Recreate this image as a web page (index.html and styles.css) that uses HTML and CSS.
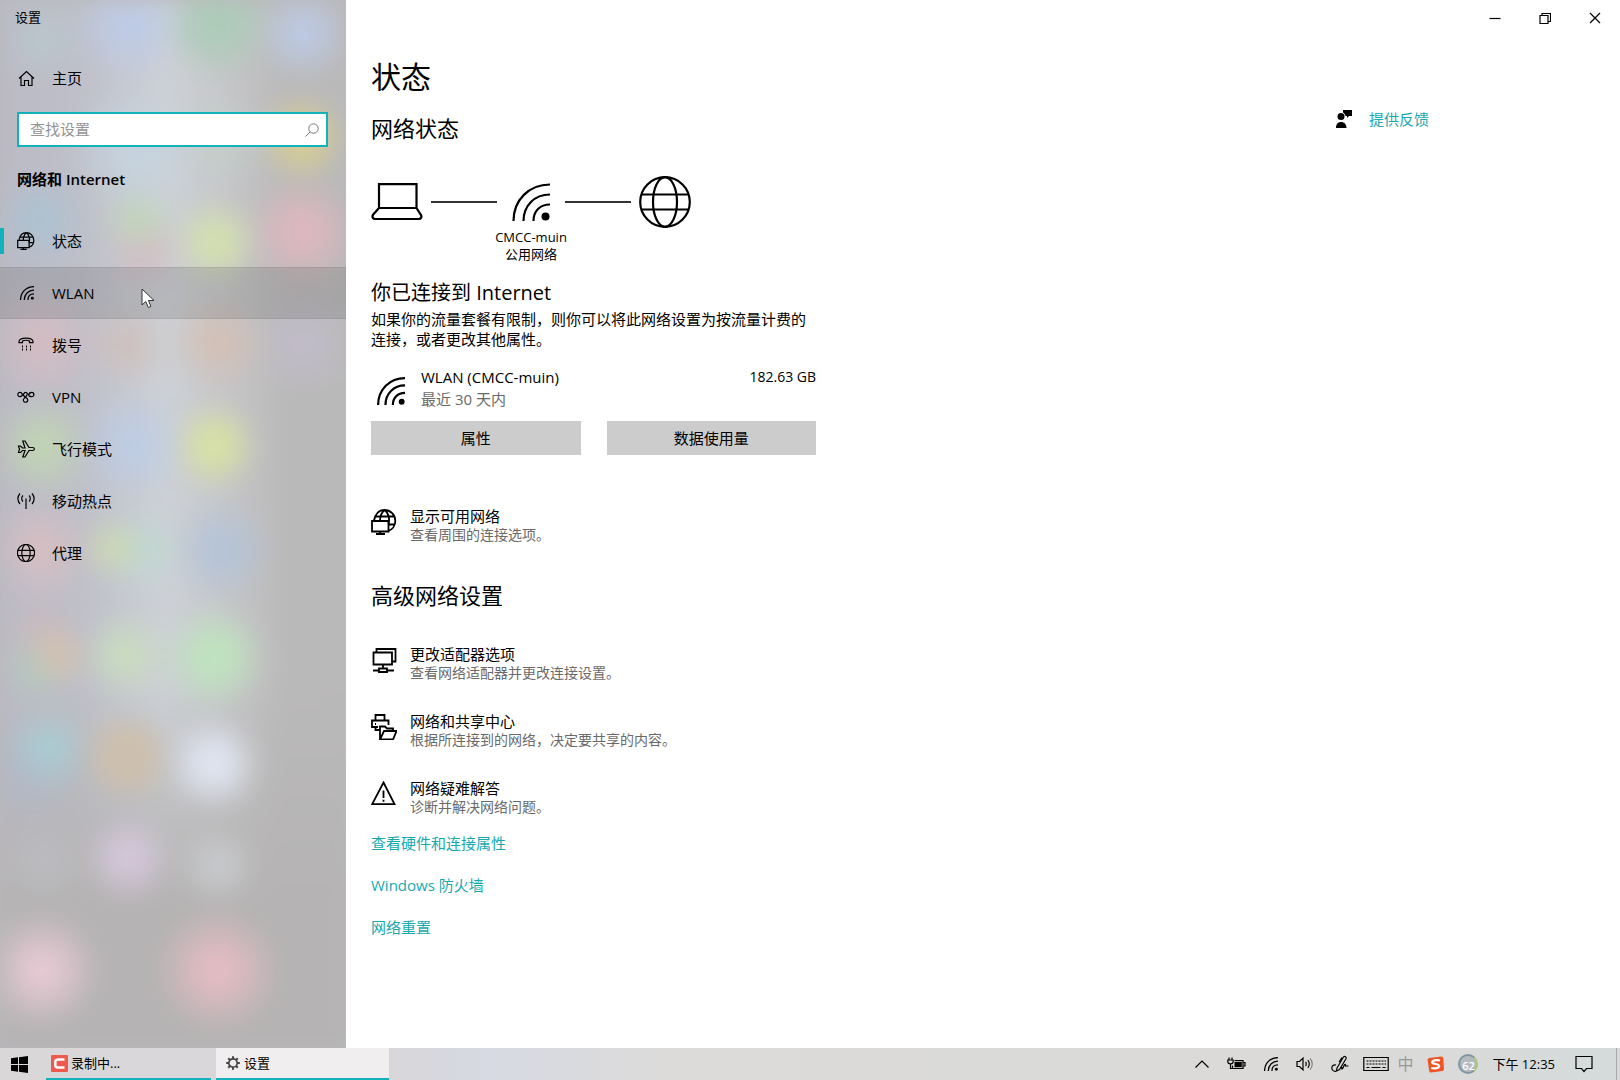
FILE: index.html
```html
<!DOCTYPE html>
<html lang="zh-CN">
<head>
<meta charset="utf-8">
<meta name="viewport" content="width=device-width, initial-scale=1">
<title>设置</title>
<link rel="stylesheet" href="styles.css">
</head>
<body>
<svg class="defs" aria-hidden="true">
  <symbol id="i-wifi" viewBox="0 0 38 38">
    <path d="M1.500 38C1.500 17 17 1.500 38 1.500M11.500 38C11.500 22.500 22.500 11.500 38 11.500M21.500 38C21.500 28 28 21.500 38 21.500"/>
    <circle class="solid" cx="33.500" cy="33.500" r="4"/>
  </symbol>
  <symbol id="i-globe" viewBox="0 0 52 52">
    <circle cx="26" cy="26" r="24.800"/><ellipse cx="26" cy="26" rx="12" ry="24.800"/><path d="M3 18.500h46M3 33.500h46"/>
  </symbol>
  <symbol id="i-netpc" viewBox="0 0 26 26">
    <path d="M3 11.500C4 5 8 1 13.500 1c6 0 10.800 4.800 10.800 10.800 0 5-3 9-7 10.200M13.500 1C10.500 3.500 9 7 9 12M13.500 1c4 3 5.500 8 4 14.500M4.500 7.500h18.500M17.500 15.500h6"/>
    <path d="M1 12h16.500v10.500H1zM9.300 22.500v2.500M5 25h9"/>
  </symbol>
</svg>

<div class="window">
  <aside class="sidebar">
    <div class="app-title">设置</div>
    <a class="home" href="#home">
      <svg class="icon" width="17" height="17" viewBox="0 0 17 17"><path d="M1 8.500 8.500 1.500 16 8.500M3 7v8.500h3.500v-5h4v5H14V7"/></svg>
      主页
    </a>
    <form class="search">
      <input type="text" placeholder="查找设置" aria-label="查找设置">
      <svg class="icon" width="14" height="14" viewBox="0 0 14 14"><circle cx="8.500" cy="5.500" r="4.700"/><path d="M5 9 .5 13.500"/></svg>
    </form>
    <h2 class="group">网络和 Internet</h2>
    <nav class="nav">
      <a class="active" href="#status"><svg class="icon netpc-s" width="18" height="18"><use href="#i-netpc"/></svg>状态</a>
      <a class="hover" href="#wlan"><svg class="icon wifi-s" width="18" height="14" viewBox="-3 0 18 14"><use href="#i-wifi" width="14" height="14"/></svg>WLAN</a>
      <a href="#dial"><svg class="icon" width="18" height="18" viewBox="0 0 18 18"><path d="M2 5.500C2.500 1 15.500 1 16 5.500v1.200h-3.500V5C11 4 7 4 5.500 5v1.700H2z"/><path class="keys" d="M5 10.500h9M5 13.500h9"/></svg>拨号</a>
      <a href="#vpn"><svg class="icon" width="18" height="14" viewBox="0 0 18 14"><path d="M5.200 4.500a2.200 2.200 0 1 0-2.200 2.200C6 6.700 6.500 2 9 2.500s1 3-.5 4.500-3 2-2 4 4.500 1.500 4.300-1S6 7 6.500 4.500"/><path d="M12.500 4.500a2.200 2.200 0 1 1 2.200 2.200C11.500 6.700 10.500 5 13 2.500"/></svg>VPN</a>
      <a href="#airplane"><svg class="icon" width="18" height="18" viewBox="0 0 18 18"><path d="M1.500 6 3.500 6 5.500 8H8L5.800 1H8l4 6.500h3.500c2.500 0 2.500 3 0 3H12L8 17H5.800L8 10.500H5.500l-2 2h-2L2.500 9.200z"/></svg>飞行模式</a>
      <a href="#hotspot"><svg class="icon" width="18" height="18" viewBox="0 0 18 18"><path d="M9 6.500V17M6 3.500C4.300 5 4.300 8 6 9.500M12 3.500c1.700 1.500 1.700 4.500 0 6M3 1.500c-2.800 3-2.800 7.500 0 10.500M15 1.500c2.800 3 2.800 7.500 0 10.500"/></svg>移动热点</a>
      <a href="#proxy"><svg class="icon globe-s" width="18" height="18"><use href="#i-globe"/></svg>代理</a>
    </nav>
    <svg class="cursor" width="14" height="21" viewBox="0 0 14 21" aria-hidden="true"><path d="M1 1v16l3.800-3.500 2.500 6 2.600-1.100-2.500-5.900H13z"/></svg>
  </aside>

  <main class="main">
    <div class="controls">
      <button aria-label="最小化"><svg class="icon" width="12" height="12" viewBox="0 0 12 12"><path d="M.5 6.500h11"/></svg></button>
      <button aria-label="还原"><svg class="icon" width="12" height="12" viewBox="0 0 12 12"><path d="M1 3.500h8v8H1zM3 3.500v-2h8.500v8H9"/></svg></button>
      <button aria-label="关闭"><svg class="icon" width="12" height="12" viewBox="0 0 12 12"><path d="m1 1 10 10M11 1 1 11"/></svg></button>
    </div>
    <h1>状态</h1>
    <div class="columns">
      <div class="content">
        <h2>网络状态</h2>
        <div class="diagram">
          <svg class="icon big" width="52" height="52" viewBox="0 0 52 52"><path d="M8 8.200h37.500V32H8zM8 32l-5.800 6.500c-1.500 2-.5 4.500 2 4.500h43.500c2.500 0 3.500-2.500 2-4.500L45.500 32"/></svg>
          <span class="link-line"></span>
          <svg class="icon big mid" width="38" height="38"><use href="#i-wifi"/></svg>
          <span class="link-line"></span>
          <svg class="icon big end" width="52" height="52"><use href="#i-globe"/></svg>
          <div class="net-name">CMCC-muin<br>公用网络</div>
        </div>
        <h3>你已连接到 Internet</h3>
        <p class="note">如果你的流量套餐有限制，则你可以将此网络设置为按流量计费的连接，或者更改其他属性。</p>
        <div class="usage">
          <svg class="icon wifi-m" width="28" height="28"><use href="#i-wifi"/></svg>
          <div class="usage-name">WLAN (CMCC-muin)<small>最近 30 天内</small></div>
          <span class="amount">182.63 GB</span>
        </div>
        <div class="buttons">
          <button>属性</button>
          <button>数据使用量</button>
        </div>
        <a class="item first" href="#available">
          <svg class="icon med" width="26" height="26"><use href="#i-netpc"/></svg>
          <span>显示可用网络<small>查看周围的连接选项。</small></span>
        </a>
        <h2 class="advanced">高级网络设置</h2>
        <div class="items">
          <a class="item" href="#adapter">
            <svg class="icon med" width="26" height="26" viewBox="0 0 26 26"><path d="M2.500 5.500h18.500v12H2.500zM5.500 5.500V2H24.500v12.500H21M12 17.500v4M8 21.500h8v3.500H8zM2 23.500h6M16 23.500h7"/></svg>
            <span>更改适配器选项<small>查看网络适配器并更改连接设置。</small></span>
          </a>
          <a class="item" href="#sharing">
            <svg class="icon med" width="26" height="26" viewBox="0 0 26 26"><path d="M4.500 6.500V1h9v5.500M7 13H1V6.500h16.500V11M4 10h1M4.500 13v3h4M9 25.500V12.500h5l2 2h6V17M9 25.500 13 17h12.500L22 25.500z"/></svg>
            <span>网络和共享中心<small>根据所连接到的网络，决定要共享的内容。</small></span>
          </a>
          <a class="item" href="#troubleshoot">
            <svg class="icon med" width="26" height="26" viewBox="0 0 26 26"><path d="M12.500 1.500 23.500 23.200H1.200zM12.500 9.500v7.500M12.500 18.800v2"/></svg>
            <span>网络疑难解答<small>诊断并解决网络问题。</small></span>
          </a>
        </div>
        <div class="links">
          <a href="#hardware">查看硬件和连接属性</a>
          <a href="#firewall">Windows 防火墙</a>
          <a href="#reset">网络重置</a>
        </div>
      </div>
      <a class="feedback" href="#feedback">
        <svg width="16" height="18" viewBox="0 0 16 18" aria-hidden="true"><path d="M7 0h9v6h-3l-2 2V6H9.500C9 4 8 3 7 2.500z"/><circle cx="5" cy="6.500" r="3.500"/><path d="M0 18c0-4 2-6 5-6s5.500 2 5.500 6z"/></svg>
        提供反馈
      </a>
    </div>
  </main>
</div>

<footer class="taskbar">
  <button class="start" aria-label="开始"><svg width="17" height="17" viewBox="0 0 17 17"><path d="M0 2.300 7 1.300V8H0zM8 1.200 17 0v8H8zM0 9h7v6.800l-7-1zM8 9h9v8l-9-1.200z"/></svg></button>
  <button class="task"><svg width="17" height="17" viewBox="0 0 17 17"><rect width="17" height="17" rx="1" fill="#ee5a4d"/><path d="M13.500 4.500H7Q4.300 4.500 4.300 7v3q0 2.500 2.700 2.500h6.500" fill="none" stroke="#fff" stroke-width="2.500"/></svg>录制中...</button>
  <button class="task current"><svg width="14" height="14" viewBox="0 0 14 14"><circle cx="7" cy="7" r="4.200" fill="none" stroke="#444" stroke-width="1.700"/><path d="M7 .2v2.400M7 11.400v2.400M.2 7h2.400M11.400 7h2.400M2.200 2.200l1.700 1.700M10.100 10.100l1.700 1.700M11.800 2.200l-1.700 1.700M3.900 10.100l-1.700 1.700" stroke="#444" stroke-width="2"/></svg>设置</button>
  <div class="tray">
    <div class="tray-icons">
      <svg class="icon" width="14" height="18" viewBox="0 0 14 18"><path d="M.5 12.500 7 6l6.500 6.500"/></svg>
      <svg class="icon" width="19" height="18" viewBox="0 0 19 18"><path d="M7.500 5.500H16v8H5.500v-3M16.200 7.500h1.800v3.500h-1.800M2 2.500v2.500M5 2.500v2.500M.8 5h5.400v1.500c0 3.200-5.400 3.200-5.400 0zM3.500 9v4.500h2"/><path class="solid" d="M7.500 6.800H14.800v5.400H7.500z"/></svg>
      <svg class="icon wifi-s" width="14" height="14"><use href="#i-wifi"/></svg>
      <svg class="icon" width="17" height="18" viewBox="0 0 17 18"><path d="M1 6.500h2.500L7 3.200v11.600L3.500 11.500H1zM9.500 7c1 1 1 3 0 4M11.800 5.200c2 2 2 5.600 0 7.600"/><path opacity=".4" d="M14 3.500c3 3 3 8 0 11"/></svg>
      <svg class="icon" width="18" height="18" viewBox="0 0 18 18"><path d="M6 13 12.500 2c1-1.500 3.500 0 2.500 1.800L8.500 14.500 5.500 16zM5 10C2.500 9.500.8 11 .8 13s2 4 4.700 3M11 12c-1 4 1 1.500 2-1.500 1-2 2-1 1.500.5h3M11 2.500 8 7"/></svg>
    </div>
    <svg class="icon" width="26" height="18" viewBox="0 0 26 18"><path d="M.8 2.500h24.400v13H.8z"/><path class="dots" d="M3.500 6h19.500M3.500 9h19.500"/><path d="M3.500 12.500h3M8.500 12.500h9M19.500 12.500h3"/></svg>
    <span class="ime">中</span>
    <svg width="17" height="17" viewBox="0 0 17 17"><path fill="#ee5424" d="M2 2 14.500.5q1.500 0 1.800 1.500l.7 11q0 1.500-1.500 2L4 16.500q-1.500.2-1.800-1.500L.6 4Q.5 2.500 2 2z"/><path fill="none" stroke="#fff" stroke-width="2.200" d="M13 4.500C9 3.500 5 4.500 5.200 6.500c.3 2 7 1 7 3.500 0 2-4 3-8 2"/></svg>
    <span class="score">62</span>
    <time>下午 12:35</time>
    <svg class="icon action" width="18" height="18" viewBox="0 0 18 18"><path d="M1 1.500h16v12h-5.500L9 16.500l-2.500-3H1z"/></svg>
    <button class="desktop" aria-label="显示桌面"></button>
  </div>
</footer>
</body>
</html>
```

FILE: styles.css
```css
* { box-sizing: border-box; }

:root {
  --accent: #12b2bd;
  --link: #17a9b0;
}

body {
  margin: 0;
  min-height: 100vh;
  display: flex;
  flex-direction: column;
  font: 15px/20px "Open Sans", "Noto Sans CJK SC", sans-serif;
  color: #000;
  background: #fff;
}

h1, h2, h3, p { margin: 0; font-weight: 400; }
a { color: inherit; text-decoration: none; }
button { font: inherit; color: inherit; border: 0; padding: 0; background: none; }
small { display: block; color: #6a6a6a; }

.defs { display: none; }
.icon { fill: none; stroke: currentColor; stroke-width: 1.2; flex: none; }
.solid { fill: currentColor; stroke: none; }
.dots { stroke-dasharray: 2 1; }
.keys { stroke-width: 2; stroke-dasharray: 1 3; }
.big { stroke-width: 2.2; }
.med { stroke-width: 1.8; }
.netpc-s { stroke-width: 1.8; }
.wifi-s { stroke-width: 3.4; }
.wifi-m { stroke-width: 3; }
.globe-s { stroke-width: 3.4; }

.window { flex: 1; display: flex; }

/* Sidebar: translucent panel over a blurred desktop */
.sidebar {
  position: relative;
  isolation: isolate;
  overflow: hidden;
  flex: none;
  width: 346px;
}

.sidebar::before {
  content: "";
  position: absolute;
  z-index: -1;
  inset: -24px;
  padding: 24px;
  filter: blur(10px);
  background-color: #b9b8bb;
  background-origin: content-box;
  background-repeat: no-repeat;
  background-image:
    radial-gradient(circle at 43px 40px, #b9c7cc, #b9c7cc00 46px),
    radial-gradient(circle at 130px 25px, #bccbea, #bccbea00 60px),
    radial-gradient(circle at 217px 22px, #aecbb9 20px, #aecbb900 58px),
    radial-gradient(circle at 303px 33px, #bdcdec, #bdcdec00 50px),
    radial-gradient(circle at 135px 150px, #c5d4e0, #c5d4e000 70px),
    radial-gradient(circle at 302px 138px, #d9cf90 8px, #d9cf9000 46px),
    radial-gradient(circle at 220px 140px, #c3cfca, #c3cfca00 50px),
    radial-gradient(circle at 40px 220px, #abc3d2, #abc3d200 50px),
    radial-gradient(circle at 138px 218px, #c1d6b5, #c1d6b500 38px),
    radial-gradient(circle at 145px 252px, #d3bcc2, #d3bcc200 42px),
    radial-gradient(circle at 216px 242px, #d4e0af 10px, #d4e0af00 46px),
    radial-gradient(circle at 302px 232px, #e1b7c0 6px, #e1b7c000 58px),
    radial-gradient(circle at 43px 343px, #d7bcc2, #d7bcc200 60px),
    radial-gradient(circle at 127px 345px, #d0bfbb, #d0bfbb00 44px),
    radial-gradient(circle at 217px 343px, #d5bfb3, #d5bfb300 52px),
    radial-gradient(circle at 303px 343px, #c2bccd, #c2bccd00 50px),
    radial-gradient(circle at 42px 447px, #c1d7b2 4px, #c1d7b200 52px),
    radial-gradient(circle at 132px 445px, #bccde8, #bccde800 56px),
    radial-gradient(circle at 215px 446px, #d7e1a4 12px, #d7e1a400 46px),
    radial-gradient(circle at 40px 550px, #d9bfc2, #d9bfc200 56px),
    radial-gradient(circle at 112px 548px, #cddab0, #cddab000 34px),
    radial-gradient(circle at 143px 550px, #bfd8d2, #bfd8d200 44px),
    radial-gradient(circle at 222px 550px, #b1c3da, #b1c3da00 54px),
    radial-gradient(circle at 58px 656px, #d6c2ae, #d6c2ae00 34px),
    radial-gradient(circle at 35px 668px, #b3c9bd, #b3c9bd00 40px),
    radial-gradient(circle at 42px 637px, #ceb9bb, #ceb9bb00 42px),
    radial-gradient(circle at 125px 655px, #cae0bd, #cae0bd00 46px),
    radial-gradient(circle at 215px 657px, #bfe3bf 14px, #bfe3bf00 54px),
    radial-gradient(circle at 48px 748px, #a8ced4, #a8ced400 44px),
    radial-gradient(circle at 30px 770px, #b1b8c8, #b1b8c800 56px),
    radial-gradient(circle at 127px 757px, #cdbfad 22px, #cdbfad00 46px),
    radial-gradient(circle at 214px 764px, #e0e5f1 12px, #e0e5f100 50px),
    radial-gradient(circle at 43px 862px, #bcbdc2, #bcbdc200 40px),
    radial-gradient(circle at 128px 858px, #d6c7dc 8px, #d6c7dc00 46px),
    radial-gradient(circle at 218px 866px, #c9cbce 4px, #c9cbce00 42px),
    radial-gradient(circle at 42px 970px, #eacbd6 6px, #eacbd600 60px),
    radial-gradient(circle at 218px 970px, #e6bcc4 8px, #e6bcc400 64px),
    linear-gradient(#b3b2b300 680px, #b5b3b3 900px),
    linear-gradient(90deg, #bbbac6, #bebfc8 80px, #cdd1d6 165px, #c6c6c9 225px, #bab9b9 285px, #bab9b9);
}

.app-title { height: 36px; padding-left: 15px; font-size: 13px; line-height: 34px; }

.home {
  display: flex;
  align-items: center;
  gap: 17px;
  height: 42px;
  margin-top: 21px;
  padding-left: 18px;
}

.search { display: flex; align-items: center; margin: 13px 18px 0 17px; height: 35px; padding-right: 7px; background: #fff; border: 2px solid var(--accent); }
.search input { flex: 1; min-width: 0; height: 100%; padding: 0 11px 1px; border: 0; outline: 0; background: none; font: inherit; }
.search input::placeholder { color: #949494; opacity: 1; }
.search .icon { color: #777; stroke-width: 1; }

.group { margin: 20px 17px 24px; font-size: 15px; line-height: 24px; font-weight: 600; }

.nav a { display: flex; align-items: center; gap: 17px; height: 52px; padding-left: 17px; }
.nav .active { background: linear-gradient(var(--accent), var(--accent)) 0 50% / 4px 26px no-repeat; }
.nav .hover { background: rgba(80, 80, 80, .18); border: solid rgba(80, 80, 80, .1); border-width: 1px 0; }

.cursor { position: absolute; left: 141px; top: 288px; fill: #fff; stroke: #333; }

/* Main area */
.main { flex: 1; min-width: 0; padding-left: 25px; }
.controls { display: flex; justify-content: flex-end; }
.controls button { display: grid; place-items: center; width: 50px; height: 35px; }

h1 { margin-top: 22px; font-size: 30px; line-height: 40px; }
h2 { font-size: 22px; line-height: 30px; }
h3 { margin-top: 16px; font-size: 20px; line-height: 28px; }

.columns { display: grid; grid-template-columns: minmax(0, 1fr) 284px; align-items: start; }
.content { max-width: 445px; padding-top: 16px; }

.feedback { display: flex; align-items: center; gap: 17px; height: 24px; margin-top: 10px; color: var(--link); }
.feedback svg { fill: #000; }

.diagram {
  display: grid;
  grid-template-columns: 60px 66px 68px 66px 60px;
  row-gap: 1px;
  align-items: center;
  margin-top: 33px;
}
.diagram .mid { justify-self: center; }
.diagram .end { justify-self: end; }
.link-line { height: 2px; background: #333; }
.net-name { grid-column: 3; justify-self: center; font-size: 13px; line-height: 17px; text-align: center; white-space: nowrap; }

.note { margin-top: 2px; }

.usage { display: flex; gap: 16px; margin-top: 17px; padding-left: 6px; line-height: 22px; }
.usage .icon { margin-top: 11px; }
.usage-name { flex: 1; }
.usage small { font-size: 15px; }
.amount { font-size: 14px; }

.buttons { display: grid; grid-template-columns: 1fr 1fr; gap: 26px; margin-top: 11px; }
.buttons button { height: 34px; background: #ccc; }

.item { display: flex; gap: 13px; }
.item.first { margin-top: 51px; }
.item .icon { margin-top: 3px; }
.item small { font-size: 14px; line-height: 18px; }
.advanced { margin: 36px 0 34px; }
.items { display: grid; gap: 29px; }

.links { display: grid; justify-items: start; gap: 22px; margin-top: 17px; padding-bottom: 24px; color: var(--link); }

/* Taskbar */
.taskbar {
  display: flex;
  height: 32px;
  font-size: 13px;
  background: linear-gradient(90deg, #d9d7d8, #d8d6d9 24%, #d7dae3 30%, #dddbd9 42%, #dadad9 60%, #dbdad8 80%, #d9dad9 90%, #d5dbdb);
}
.start { display: grid; place-items: center; width: 38px; margin-right: 8px; }
.task { display: flex; align-items: center; gap: 3px; width: 165px; margin-right: 5px; padding-left: 5px; border-bottom: 2px solid var(--accent); }
.task.current { width: 173px; gap: 4px; padding-left: 10px; background: #f0eeef; }

.tray { display: flex; align-items: center; gap: 14px; margin-left: auto; }
.tray-icons { display: flex; align-items: center; gap: 18px; }
.ime { margin-left: -6px; font-size: 16px; color: #999; }
.score {
  display: grid;
  place-items: center;
  width: 20px;
  height: 20px;
  border: 2px solid #7e98a0;
  border-right-color: #a4c77a;
  border-radius: 50%;
  background: #b4babd;
  color: #fff;
  font-size: 11px;
  font-weight: 600;
}
.action { margin-left: 6px; }
.desktop { width: 4px; height: 32px; margin-left: 9px; border-left: 1px solid #aaa; }
```
